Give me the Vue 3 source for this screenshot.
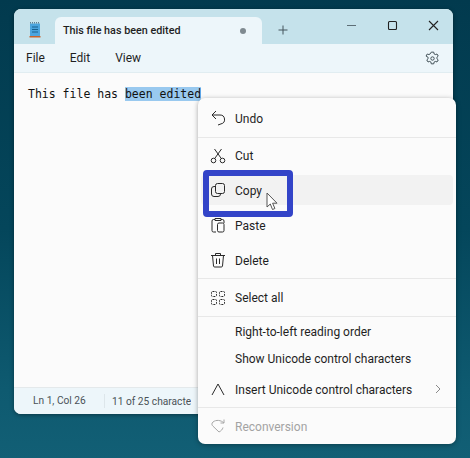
<script setup>
const tabTitle = 'This file has been edited'
</script>

<template>
  <div class="desktop">
    <div class="window">
      <div class="titlebar">
        <div class="app-icon">
          <svg width="14" height="18" viewBox="0 0 14 18">
            <rect x="2" y="2.500" width="10" height="12.500" fill="#4ba5de" />
            <path d="M2.500 2.500V1M4.500 2.500V1M6.500 2.500V1M8.500 2.500V1M10.500 2.500V1" stroke="#5f7f92" stroke-width="1" />
            <path d="M4 6h6M4 8.500h6M4 11h6" stroke="#17618f" stroke-width="1" />
            <rect x="1.500" y="15" width="11" height="1.500" fill="#c8622a" />
          </svg>
        </div>
        <div class="tab">
          <span class="tab-title">{{ tabTitle }}</span>
          <span class="dot"></span>
        </div>
        <svg class="plus" width="12" height="12" viewBox="0 0 12 12">
          <path d="M6 1.500v9M1.500 6h9" stroke="#44545c" stroke-width="1" fill="none" />
        </svg>
        <div class="controls">
          <svg width="11" height="11" viewBox="0 0 11 11"><path d="M1 5.500h9" stroke="#5d6e76" stroke-width="1.200" /></svg>
          <svg width="11" height="11" viewBox="0 0 11 11"><rect x="1.500" y="1.500" width="8" height="8" rx="1" stroke="#222" stroke-width="1.100" fill="none" /></svg>
          <svg width="11" height="11" viewBox="0 0 11 11"><path d="M1 1l9 9M10 1l-9 9" stroke="#222" stroke-width="1.100" /></svg>
        </div>
      </div>

      <div class="toolbar">
        <span>File</span>
        <span>Edit</span>
        <span>View</span>
        <svg class="gear" width="15" height="15" viewBox="0 0 16 16" fill="none" stroke="#39474e" stroke-width="1">
          <path d="M6.700 1.200h2.600l.4 1.900 1.300.7 1.800-.6 1.300 2.200-1.400 1.300v1.500l1.400 1.300-1.300 2.200-1.800-.6-1.300.7-.4 1.900H6.700l-.4-1.900-1.300-.7-1.800.6-1.300-2.200 1.400-1.300V6.700L1.100 5.400l1.300-2.200 1.800.6 1.300-.7z" stroke-linejoin="round" />
          <circle cx="8" cy="8" r="1.800" />
        </svg>
      </div>

      <div class="editor">
        <p class="line">This file has <mark>been edited</mark></p>
      </div>

      <div class="statusbar">
        <span class="pos">Ln 1, Col 26</span>
        <span class="chars">11 of 25 characters</span>
      </div>
    </div>

    <div class="menu">
      <div class="row">
        <svg class="ico" viewBox="0 0 16 16"><path d="M6 1L2 5l4 4M2 5h8a4.500 4.500 0 0 1 1 8.900L8 15" /></svg>
        <span>Undo</span>
      </div>
      <div class="sep"></div>
      <div class="row">
        <svg class="ico" viewBox="0 0 16 16"><circle cx="3.500" cy="12.500" r="2.300" /><circle cx="12.500" cy="12.500" r="2.300" /><path d="M4.700 10.500L11.500 1M11.300 10.500L4.500 1" /></svg>
        <span>Cut</span>
      </div>
      <div class="row hover">
        <svg class="ico" viewBox="0 0 16 16"><rect x="5.500" y="1.500" width="9" height="10" rx="2" /><path d="M5.500 4.500H4a2.500 2.500 0 0 0-2.500 2.500v5A2.500 2.500 0 0 0 4 14.500h4a2.500 2.500 0 0 0 2.500-2.500v-.5" /></svg>
        <span>Copy</span>
      </div>
      <div class="row">
        <svg class="ico" viewBox="0 0 16 16"><path d="M5 2.500H3.500A1.500 1.500 0 0 0 2 4v9.500A1.500 1.500 0 0 0 3.500 15H6M11 2.500h1.500A1.500 1.500 0 0 1 14 4v2M5 1.500h6v2H5z" /><rect x="7.500" y="6" width="6.500" height="9" rx="1.500" /></svg>
        <span>Paste</span>
      </div>
      <div class="row">
        <svg class="ico" viewBox="0 0 16 16"><path d="M1 3.500h14M5.500 3.500V1.500h5v2M2.500 3.500l1 10.500a1.200 1.200 0 0 0 1.200 1h6.600a1.200 1.200 0 0 0 1.200-1l1-10.500M6.500 6.500v5.500M9.500 6.500v5.500" /></svg>
        <span>Delete</span>
      </div>
      <div class="sep"></div>
      <div class="row">
        <svg class="ico" viewBox="0 0 16 16" stroke-dasharray="2 1"><rect x="1.500" y="1.500" width="5" height="5" rx="1" /><rect x="9.500" y="1.500" width="5" height="5" rx="1" /><rect x="1.500" y="9.500" width="5" height="5" rx="1" /><rect x="9.500" y="9.500" width="5" height="5" rx="1" /></svg>
        <span>Select all</span>
      </div>
      <div class="sep"></div>
      <div class="row short"><span class="no-ico">Right-to-left reading order</span></div>
      <div class="row short"><span class="no-ico">Show Unicode control characters</span></div>
      <div class="row insert">
        <svg class="ico" viewBox="0 0 16 16"><path d="M2 14L8 3l6 11" /></svg>
        <span>Insert Unicode control characters</span>
        <svg class="chev" width="8" height="10" viewBox="0 0 8 10"><path d="M2 1l4 4-4 4" fill="none" stroke="#8a8a8a" /></svg>
      </div>
      <div class="sep"></div>
      <div class="row disabled">
        <svg class="ico" viewBox="0 0 16 16"><path d="M14 1.500V5h-3.500M14 5C11 2 6 1.500 3 4c-1.500 1.300-1.500 3 0 4.200L9 14c2-1 3.500-2.500 4-4.500" /></svg>
        <span>Reconversion</span>
      </div>
    </div>

    <div class="highlight"></div>

    <svg class="cursor" width="13" height="19" viewBox="0 0 13 19">
      <path d="M1 1v14l3.300-3 2.200 5.500 2.400-1-2.300-5.300H11z" fill="#fff" stroke="#555" stroke-width="1" stroke-linejoin="round" />
    </svg>
  </div>
</template>

<style>
html,
body {
  margin: 0;
  overflow: hidden;
}
</style>

<style scoped>
.desktop {
  position: relative;
  box-sizing: border-box;
  width: 470px;
  height: 458px;
  padding: 9px 17px 0 14px;
  background: linear-gradient(180deg, #023a4e 0%, #04465b 50%, #0e5a70 85%, #125f75 100%);
  font-family: Roboto, sans-serif;
  font-size: 12px;
  color: #1f1f1f;
}

.window {
  display: flex;
  flex-direction: column;
  height: 405px;
  border-radius: 7px;
  overflow: hidden;
  background: #fbfbfb;
  box-shadow: 0 1px 4px rgba(0, 0, 0, 0.4);
}

.titlebar {
  display: flex;
  align-items: flex-end;
  height: 35px;
  flex-shrink: 0;
  background: #c5e2eb;
}

.app-icon {
  display: flex;
  justify-content: center;
  width: 41px;
  padding-bottom: 5px;
}

.tab {
  display: flex;
  align-items: center;
  justify-content: space-between;
  box-sizing: border-box;
  width: 207px;
  height: 27px;
  padding: 0 16px 0 8px;
  border-radius: 6px 6px 0 0;
  background: #edf6fa;
}

.tab-title {
  font-size: 10.8px;
  font-weight: 500;
}

.dot {
  width: 6px;
  height: 6px;
  border-radius: 50%;
  background: #7f8a90;
}

.plus {
  margin: 0 0 8px 15px;
}

.controls {
  display: flex;
  gap: 30px;
  margin-left: auto;
  padding: 0 14px 11px 0;
  align-self: flex-end;
  height: 13px;
}

.toolbar {
  display: flex;
  align-items: center;
  gap: 25px;
  height: 28px;
  flex-shrink: 0;
  padding: 0 13px 0 12px;
  background: #edf6fa;
  border-bottom: 1px solid #e1edf1;
}

.gear {
  margin-left: auto;
}

.editor {
  flex: 1;
  padding: 13px 14px;
  border-bottom: 1px solid #e4e9eb;
}

.line {
  margin: 0;
  font-family: "DejaVu Sans Mono", monospace;
  font-size: 11.5px;
  line-height: 16px;
  color: #111;
}

.line mark {
  background: #99c9ef;
  color: #111;
}

.statusbar {
  display: flex;
  align-items: center;
  height: 26px;
  flex-shrink: 0;
  background: #edf6fa;
  font-size: 10.2px;
  color: #4a5257;
}

.pos {
  box-sizing: border-box;
  width: 91px;
  padding-left: 19px;
  border-right: 1px solid #dde6ea;
  line-height: 14px;
}

.chars {
  width: 79px;
  margin-left: 7px;
  white-space: nowrap;
  overflow: hidden;
}

.menu {
  position: absolute;
  left: 198px;
  top: 98px;
  box-sizing: border-box;
  width: 258px;
  height: 346px;
  padding: 3px 3px 0;
  border-radius: 7px;
  background: #fbfbfb;
  box-shadow: 0 1px 5px rgba(0, 0, 0, 0.35);
}

.row {
  display: flex;
  align-items: center;
  height: 34.6px;
  padding-left: 9px;
  border-radius: 4px;
}

.row > span {
  padding-top: 1px;
}

.row.short {
  height: 27px;
}

.row.insert {
  height: 33px;
  margin-top: 1px;
}

.row.hover {
  position: relative;
  height: 30px;
  margin: 2px 0 3px;
  background: #f2f2f2;
}

.row.disabled {
  color: #a3a3a3;
}

.ico {
  flex-shrink: 0;
  width: 16px;
  height: 16px;
  margin-right: 9px;
  fill: none;
  stroke: #2a2a2a;
  stroke-width: 1;
}

.disabled .ico {
  stroke: #a8a8a8;
}

.no-ico {
  margin-left: 25px;
}

.chev {
  margin-left: auto;
  margin-right: 11px;
}

.sep {
  height: 1px;
  margin: 1px -3px;
  background: #e8e8e8;
}

.highlight {
  position: absolute;
  left: 203px;
  top: 170px;
  box-sizing: border-box;
  width: 90px;
  height: 47px;
  border: 6px solid #3344c8;
  border-radius: 4px;
}

.cursor {
  position: absolute;
  left: 266px;
  top: 192px;
}
</style>
